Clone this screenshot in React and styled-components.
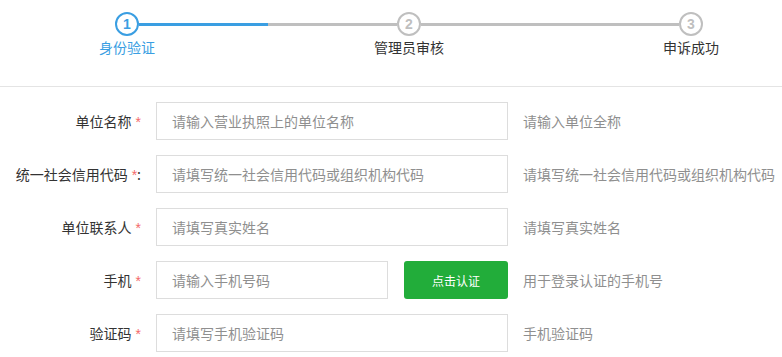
import React from "react";
import styled, { createGlobalStyle } from "styled-components";

const Global = createGlobalStyle`
  html, body { margin: 0; padding: 0; background: #fff; }
  body { font-family: "Liberation Sans", "Noto Sans CJK SC", sans-serif; font-size: 14px; color: #333; }
  * { box-sizing: border-box; }
`;

const BLUE = "#3a9ee2";
const GREY = "#bfbfbf";

const Header = styled.div`
  height: 87px;
  border-bottom: 1px solid #e4e4e4;
  padding: 12px 0 0 115px;
`;

const Steps = styled.div`
  width: 588px;
  display: grid;
  grid-template-columns: 24px 1fr 24px 1fr 24px;
  grid-template-rows: 24px auto;
  row-gap: 1px;
  align-items: center;
`;

const Circle = styled.div`
  width: 24px;
  height: 24px;
  border-radius: 50%;
  border: 2px solid ${(p) => (p.$active ? BLUE : GREY)};
  color: ${(p) => (p.$active ? BLUE : GREY)};
  background: #fff;
  display: flex;
  align-items: center;
  justify-content: center;
  font-family: "Liberation Sans", Arial, sans-serif;
  font-weight: bold;
  font-size: 14px;
  line-height: 1;
`;

const Track = styled.div`
  height: 3px;
  background: ${(p) =>
    p.$half ? `linear-gradient(to right, ${BLUE} 50%, ${GREY} 50%)` : GREY};
`;

const StepLabel = styled.div`
  width: 24px;
  display: flex;
  justify-content: center;
  white-space: nowrap;
  font-family: "Noto Sans CJK SC", sans-serif;
  font-size: 14px;
  line-height: 20px;
  color: ${(p) => (p.$active ? BLUE : "#333")};
  grid-column: ${(p) => p.$col};
  grid-row: 2;
`;

const Form = styled.div`
  padding-top: 15px;
  display: flex;
  flex-direction: column;
  gap: 15px;
`;

const Row = styled.div`
  display: flex;
  align-items: center;
  gap: 15px;
  height: 38px;
`;

const Label = styled.div`
  width: 141px;
  text-align: right;
  font-family: "Noto Sans CJK SC", sans-serif;
  font-size: 14px;
  color: #333;
  white-space: nowrap;
`;

const Star = styled.span`
  color: #f46a6a;
  margin-left: 4px;
  font-family: "Liberation Sans", sans-serif;
`;

const Field = styled.div`
  width: 352px;
  display: flex;
  gap: 16px;
`;

const Input = styled.input`
  width: ${(p) => p.$w || 352}px;
  height: 38px;
  border: 1px solid #dddddd;
  border-radius: 0;
  padding: 0 15px;
  font-family: "Noto Sans CJK SC", sans-serif;
  font-size: 14px;
  color: #333;
  outline: none;
  &::placeholder { color: #8f8f8f; }
`;

const Button = styled.button`
  width: 104px;
  height: 38px;
  border: none;
  border-radius: 3px;
  background: #22ad3a;
  color: #fff;
  font-family: "Noto Sans CJK SC", sans-serif;
  font-size: 12px;
  cursor: pointer;
  padding: 0;
`;

const Help = styled.div`
  font-family: "Noto Sans CJK SC", sans-serif;
  font-size: 14px;
  color: #8f8f8f;
  white-space: nowrap;
`;

const rows = [
  { label: "单位名称", ph: "请输入营业执照上的单位名称", help: "请输入单位全称" },
  { label: "统一社会信用代码", colon: true, ph: "请填写统一社会信用代码或组织机构代码", help: "请填写统一社会信用代码或组织机构代码" },
  { label: "单位联系人", ph: "请填写真实姓名", help: "请填写真实姓名" },
  { label: "手机", ph: "请输入手机号码", help: "用于登录认证的手机号", button: "点击认证" },
  { label: "验证码", ph: "请填写手机验证码", help: "手机验证码" },
];

export default function App() {
  return (
    <>
      <Global />
      <Header>
        <Steps>
          <Circle $active>1</Circle>
          <Track $half />
          <Circle>2</Circle>
          <Track />
          <Circle>3</Circle>
          <StepLabel $active $col={1}>身份验证</StepLabel>
          <StepLabel $col={3}>管理员审核</StepLabel>
          <StepLabel $col={5}>申诉成功</StepLabel>
        </Steps>
      </Header>
      <Form>
        {rows.map((r) => (
          <Row key={r.label}>
            <Label>
              {r.label}
              <Star>*</Star>
              {r.colon ? ":" : ""}
            </Label>
            <Field>
              {r.button ? (
                <>
                  <Input $w={232} placeholder={r.ph} />
                  <Button>{r.button}</Button>
                </>
              ) : (
                <Input placeholder={r.ph} />
              )}
            </Field>
            <Help>{r.help}</Help>
          </Row>
        ))}
      </Form>
    </>
  );
}
